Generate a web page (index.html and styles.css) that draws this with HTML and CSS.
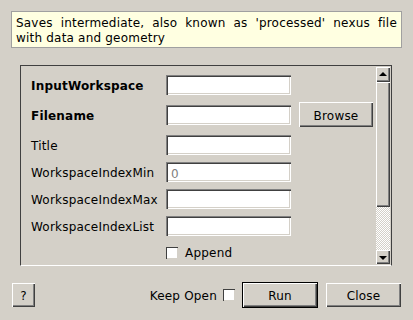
FILE: index.html
```html
<!DOCTYPE html>
<html lang="en">
<head>
  <meta charset="UTF-8" />
  <meta name="viewport" content="width=device-width, initial-scale=1.0" />
  <title>SaveNexusProcessed</title>
  <link rel="stylesheet" href="styles.css">
</head>
<body>
  <div class="dialog">
    <div class="desc">Saves intermediate, also known as 'processed' nexus file with data and geometry</div>

    <div class="panel">
      <div class="props">
        <label class="name bold">InputWorkspace</label>
        <input class="field" type="text">
        <span></span>

        <label class="name bold">Filename</label>
        <input class="field" type="text">
        <button class="btn browse">Browse</button>

        <label class="name">Title</label>
        <input class="field" type="text">
        <span></span>

        <label class="name">WorkspaceIndexMin</label>
        <input class="field" type="text" placeholder="0">
        <span></span>

        <label class="name">WorkspaceIndexMax</label>
        <input class="field" type="text">
        <span></span>

        <label class="name">WorkspaceIndexList</label>
        <input class="field" type="text">
        <span></span>

        <span></span>
        <div class="check-row"><span class="check"></span>Append</div>
        <span></span>
      </div>

      <div class="scrollbar">
        <div class="sb-btn up"><span class="arrow-up"></span></div>
        <div class="sb-slider"></div>
        <div class="sb-trough"></div>
        <div class="sb-btn down"><span class="arrow-down"></span></div>
      </div>
    </div>

    <div class="footer">
      <button class="btn help">?</button>
      <div class="spacer"></div>
      <span class="keep">Keep Open</span>
      <span class="check keep-check"></span>
      <button class="btn default run">Run</button>
      <button class="btn close">Close</button>
    </div>
  </div>
</body>
</html>
```

FILE: styles.css
```css
body {
  margin: 0;
  width: 413px;
  height: 320px;
  background: #d4d0c8;
  font-family: "DejaVu Sans", sans-serif;
  font-size: 12px;
  letter-spacing: 0.2px;
  color: #000;
  overflow: hidden;
}
.dialog {
  padding-top: 11px;
}
.desc {
  margin-left: 11px;
  width: 391px;
  height: 37px;
  box-sizing: border-box;
  padding: 4px 4px 0 4px;
  background: #ffffe1;
  border: 1px solid #a0a0a0;
  line-height: 15px;
  text-align: justify;
  color: #000;
}
.panel {
  margin: 17px 0 0 20px;
  width: 372px;
  height: 201px;
  box-sizing: border-box;
  padding: 1px;
  border: 1px solid #404040;
  border-bottom-color: #fff;
  display: flex;
}
.props {
  flex: 1;
  display: grid;
  grid-template-columns: 135px 125px 82px;
  grid-template-rows: 20px 26px 20px 20px 20px 20px 20px;
  row-gap: 7px;
  align-items: center;
  align-content: start;
  padding: 8px 0 0 9px;
}
.name {
  white-space: nowrap;
  padding-top: 2px;
}
.bold {
  font-weight: bold;
}
.field {
  width: 125px;
  height: 20px;
  box-sizing: border-box;
  border: none;
  margin: 0;
  padding: 3px 5px 0;
  background: #fff;
  font: inherit;
  letter-spacing: inherit;
  box-shadow: inset 1px 1px #808080, inset 2px 2px #404040, inset -1px -1px #fff, inset -2px -2px #d4d0c8;
  outline: none;
}
.field::placeholder {
  color: #808080;
}
.btn {
  margin: 0;
  padding: 2px 0 0;
  border: none;
  background: #d4d0c8;
  font: inherit;
  letter-spacing: inherit;
  color: #000;
  box-shadow: inset 1px 1px #fff, inset -1px -1px #404040, inset -2px -2px #808080;
}
.browse {
  align-self: start;
  margin-left: 8px;
  width: 74px;
  height: 25px;
}
.check-row {
  display: flex;
  align-items: center;
  gap: 7px;
}
.check {
  display: inline-block;
  width: 12px;
  height: 12px;
  box-sizing: border-box;
  background: #fff;
  box-shadow: inset 1px 1px #404040, inset -1px -1px #d4d0c8;
}
.scrollbar {
  width: 14px;
  display: flex;
  flex-direction: column;
}
.sb-btn,
.sb-slider {
  background: #d4d0c8;
  box-shadow: inset 1px 1px #fff, inset -1px -1px #404040, inset -2px -2px #808080;
  display: flex;
  align-items: center;
  justify-content: center;
}
.sb-btn.up {
  height: 15px;
}
.sb-btn.down {
  height: 14px;
}
.sb-slider {
  height: 125px;
}
.sb-trough {
  height: 43px;
  background: repeating-conic-gradient(#fff 0 25%, #d4d0c8 0 50%) 0 0 / 2px 2px;
}
.arrow-up,
.arrow-down {
  width: 0;
  height: 0;
  border-left: 4px solid transparent;
  border-right: 4px solid transparent;
}
.arrow-up {
  border-bottom: 4px solid #000;
  margin-top: -1px;
}
.arrow-down {
  border-top: 4px solid #000;
  margin-top: 1px;
}
.footer {
  margin-top: 16px;
  height: 26px;
  padding: 0 12px;
  display: flex;
  align-items: center;
}
.help {
  width: 23px;
  height: 24px;
}
.spacer {
  flex: 1;
}
.keep {
  padding-top: 2px;
}
.keep-check {
  margin-left: 6px;
}
.run {
  margin-left: 7px;
  width: 76px;
  height: 26px;
}
.default {
  border: 1px solid #000;
}
.close {
  margin-left: 8px;
  width: 75px;
  height: 24px;
}
```
